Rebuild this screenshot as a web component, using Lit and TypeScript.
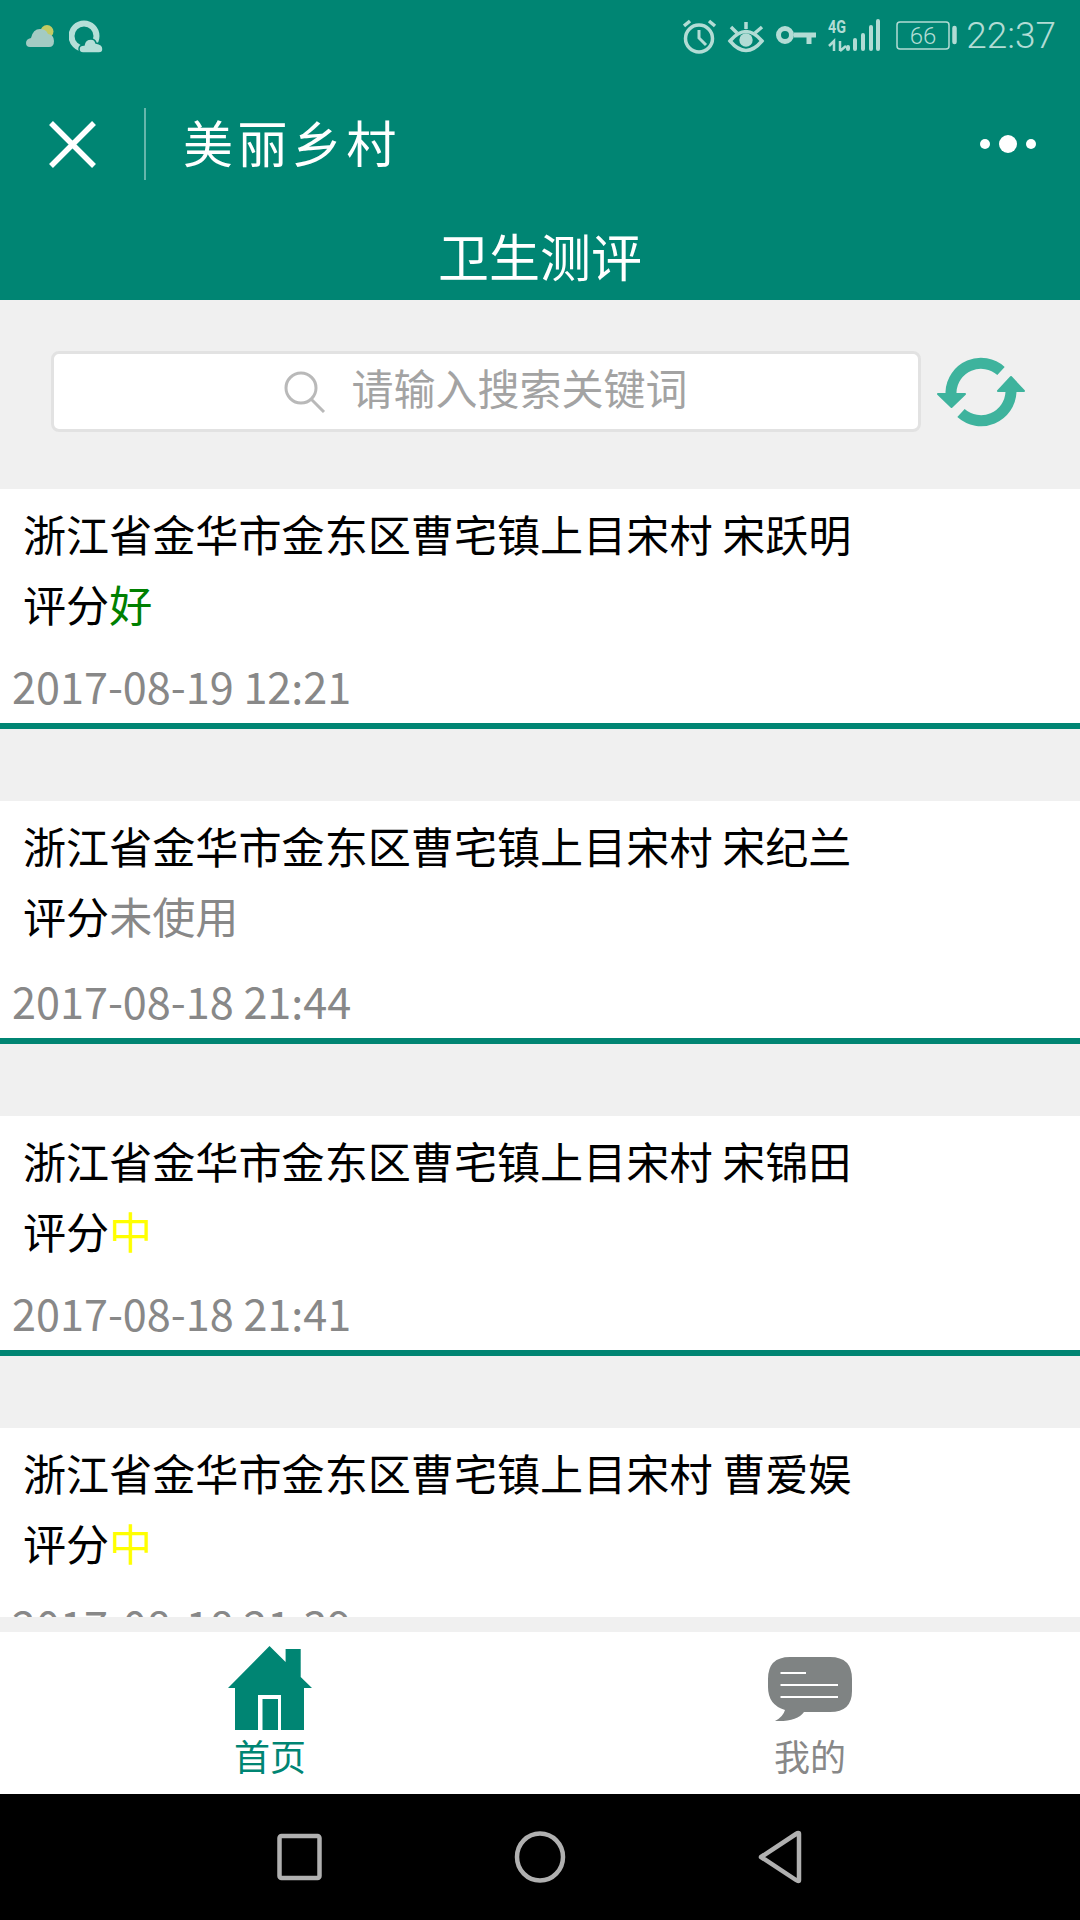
import { LitElement, html, css, svg } from 'lit';
import { customElement } from 'lit/decorators.js';

type Grade = 'good' | 'unused' | 'medium';

const RECORDS: { name: string; label: string; grade: Grade; date: string }[] = [
  { name: '宋跃明', label: '好', grade: 'good', date: '2017-08-19 12:21' },
  { name: '宋纪兰', label: '未使用', grade: 'unused', date: '2017-08-18 21:44' },
  { name: '宋锦田', label: '中', grade: 'medium', date: '2017-08-18 21:41' },
  { name: '曹爱娱', label: '中', grade: 'medium', date: '2017-08-18 21:39' },
];

const ADDRESS = '浙江省金华市金东区曹宅镇上目宋村';

@customElement('app-root')
export class AppRoot extends LitElement {
  static styles = css`
    :host {
      display: flex;
      flex-direction: column;
      width: 1080px;
      height: 1920px;
      overflow: hidden;
      background: #f0f0f0;
      font-family: 'Noto Sans CJK SC', 'Noto Sans', sans-serif;
      color: #000;
    }

    header {
      display: flex;
      flex-direction: column;
      height: 300px;
      flex: none;
      background: #008573;
      color: #fff;
    }

    .status {
      display: flex;
      align-items: center;
      height: 72px;
      padding: 0 24px 0 26px;
    }

    .status svg {
      display: block;
      flex: none;
    }

    .status-left {
      display: flex;
      align-items: center;
      gap: 15px;
      flex: 1;
    }

    .status-right {
      display: flex;
      align-items: center;
    }

    .time {
      margin-left: 9px;
      font-family: Roboto, sans-serif;
      font-size: 37px;
      font-weight: 300;
      line-height: 72px;
      color: #b2dcd5;
    }

    .title-bar {
      display: flex;
      align-items: center;
      height: 72px;
      margin-top: 36px;
      padding-left: 49px;
    }

    .divider {
      width: 2px;
      height: 72px;
      margin: 0 37px 0 48px;
      background: rgba(255, 255, 255, 0.4);
    }

    .title {
      flex: 1;
      padding-bottom: 7px;
      font-size: 50px;
      letter-spacing: 4.4px;
      line-height: 72px;
    }

    .dots {
      margin-right: 44px;
    }

    .subtitle {
      margin-top: 40px;
      text-align: center;
      font-size: 51px;
      line-height: 70px;
    }

    .search-row {
      display: flex;
      align-items: center;
      flex: none;
      padding: 51px 55px 57px 51px;
    }

    .search {
      display: flex;
      align-items: center;
      justify-content: center;
      gap: 25px;
      box-sizing: border-box;
      width: 870px;
      height: 81px;
      background: #fff;
      border: 3px solid #e2e2e2;
      border-radius: 8px;
      color: #a3a3a3;
      font-size: 42px;
    }

    .search span {
      padding-bottom: 11px;
    }

    .refresh {
      margin-left: 16px;
    }

    .list {
      flex: 1;
      min-height: 0;
      overflow: hidden;
    }

    .card {
      margin-bottom: 72px;
      padding-top: 9px;
      background: #fff;
      border-bottom: 6px solid #008573;
    }

    .line {
      padding-left: 23px;
      font-size: 43.1px;
      line-height: 70px;
      white-space: pre;
    }

    .date {
      padding: 12px 0 2px 12px;
      font-size: 43.2px;
      line-height: 71px;
      color: #888;
    }

    /* the row with the longer grade sits 3px taller in the reference */
    .card.tall .date {
      padding-top: 15px;
    }

    .grade.good { color: #008000; }
    .grade.unused { color: #888; }
    .grade.medium { color: #ffff00; }

    nav.tabs {
      display: grid;
      grid-template-columns: 1fr 1fr;
      flex: none;
      height: 162px;
      margin-top: 15px;
      background: #fff;
    }

    .tab {
      display: flex;
      flex-direction: column;
      align-items: center;
      font-size: 36px;
      line-height: 50px;
      color: #888;
    }

    .tab.active {
      color: #008573;
    }

    .tab-icon {
      display: flex;
      align-items: flex-end;
      justify-content: center;
      height: 98px;
    }

    .bubble {
      margin-bottom: 7px;
    }

    .keys {
      display: flex;
      flex: none;
      height: 126px;
      background: #000;
    }

    .keys svg {
      display: block;
      width: 100%;
      height: 100%;
    }
  `;

  render() {
    return html`
      ${this.renderHeader()}
      <div class="search-row">
        <div class="search">
          <svg width="42" height="42" viewBox="0 0 42 42" fill="none" stroke="#b9b9b9" stroke-width="3">
            <circle cx="17" cy="17" r="15" />
            <path d="M27 28 L40 41" />
          </svg>
          <span>请输入搜索关键词</span>
        </div>
        <svg class="refresh" width="88" height="73" viewBox="937 356 88 73">
          <g fill="none" stroke="#3eb39d" stroke-width="11">
            <path d="M1001 372 A30 30 0 0 0 951 393 V397" />
            <path d="M961 414 A30 30 0 0 0 1011 393 V389" />
          </g>
          <path d="M938 395 H965 L951.5 408 Z M998 392 H1024 L1011 378 Z" fill="#3eb39d" stroke="#3eb39d" stroke-width="2" stroke-linejoin="round" />
        </svg>
      </div>
      <div class="list">${RECORDS.map((r) => this.renderCard(r))}</div>
      ${this.renderTabs()}
      <div class="keys">
        <svg viewBox="0 0 1080 126" fill="none" stroke="#b0b0b0" stroke-width="4.5" stroke-linejoin="round">
          <rect x="279.5" y="42" width="40" height="42" rx="2" />
          <ellipse cx="540" cy="63" rx="23" ry="23.5" />
          <path d="M799 40 V86 Q799 88 796 86 L761 63 L796 40 Q799 38 799 40 Z" />
        </svg>
      </div>
    `;
  }

  private renderHeader() {
    return html`<header>
      <div class="status">
        <div class="status-left">
          <svg width="28" height="23" viewBox="0 0 28 23">
            <circle cx="21" cy="6.5" r="6.5" fill="#c3cb63" />
            <path d="M4 22 Q0 22 0 18 Q0 14 5 13 Q7 4 14 4 Q20 4 22 9 Q28 10 28 16 Q28 22 23 22 Z" fill="#a3cbc3" />
          </svg>
          <svg width="34" height="33" viewBox="0 0 34 33">
            <circle cx="15" cy="16" r="12.5" fill="none" stroke="#b5dfd8" stroke-width="6" />
            <path d="M14 33 Q10 33 10 29 Q10 25 15 25 Q16 19 22 19 Q26 19 27 23 Q34 24 34 29 Q34 33 30 33 Z" fill="#b5dfd8" stroke="#008573" stroke-width="1.5" />
          </svg>
        </div>
        <div class="status-right">${this.renderStatusIcons()}<span class="time">22:37</span></div>
      </div>
      <div class="title-bar">
        <svg width="47" height="47" viewBox="0 0 47 47" stroke="#fff" stroke-width="5.5">
          <path d="M2 2 L45 45 M45 2 L2 45" />
        </svg>
        <div class="divider"></div>
        <div class="title">美丽乡村</div>
        <svg class="dots" width="56" height="18" viewBox="0 0 56 18" fill="#fff">
          <circle cx="5" cy="9" r="5" />
          <circle cx="28" cy="9" r="9" />
          <circle cx="51" cy="9" r="5" />
        </svg>
      </div>
      <div class="subtitle">卫生测评</div>
    </header>`;
  }

  private renderStatusIcons() {
    const c = '#b2dcd5';
    return svg`<svg width="274" height="36" viewBox="683 18 274 36" fill="none" stroke=${c}>
      <circle cx="699" cy="38.5" r="13.5" stroke-width="3.5" />
      <path d="M699 30 V38 L706 45" stroke-width="3" />
      <path d="M684 26 L690 21 M709 21 L715 26" stroke-width="3.5" />
      <path d="M730 41 Q746 22 762 41 Q746 60 730 41 Z" stroke-width="3.5" />
      <circle cx="746" cy="40" r="6.7" fill=${c} stroke="none" />
      <path d="M746 22 V29 M731 27 L737 33 M762 27 L755 33" stroke-width="3.5" />
      <circle cx="785" cy="35" r="6.5" stroke-width="5" />
      <path d="M794 35 H816 M809 35 V44" stroke-width="5" />
      <text x="828" y="33" textLength="18" lengthAdjust="spacingAndGlyphs" fill=${c} stroke="none" font-family="Roboto, sans-serif" font-size="18" font-weight="700">4G</text>
      <path d="M829 46 L834 41 V51 M840 51 V41 M840 51 L846 46" stroke-width="2.5" />
      <g stroke-width="4" stroke-linecap="round">
        <path d="M848 47 V49 M855 40 V49 M863 35 V49 M871 27 V49 M878 21 V49" />
      </g>
      <rect x="897" y="22" width="52" height="27" rx="3" stroke-width="1.5" />
      <path d="M954.5 28 V42" stroke-width="4.5" stroke-linecap="round" />
      <text x="923" y="44" text-anchor="middle" fill=${c} stroke="none" font-family="Roboto, sans-serif" font-size="24" font-weight="300">66</text>
    </svg>`;
  }

  private renderCard(r: { name: string; label: string; grade: Grade; date: string }) {
    return html`<div class="card ${r.grade === 'unused' ? 'tall' : ''}">
      <div class="line">${ADDRESS} ${r.name}</div>
      <div class="line">评分<span class="grade ${r.grade}">${r.label}</span></div>
      <div class="date">${r.date}</div>
    </div>`;
  }

  private renderTabs() {
    return html`<nav class="tabs">
      <div class="tab active">
        <div class="tab-icon">
          <svg width="84" height="84" viewBox="0 0 84 84">
            <path fill-rule="evenodd" fill="#008573" d="M41.5 0 L57.6 16 V3 H72.7 V31 L84 42 H76 V84 H7 V42 H0 Z M30 49 V84 H53 V49 Z" />
            <path fill="#008573" d="M34.5 53 H50 V84 H34.5 Z" />
          </svg>
        </div>
        <span>首页</span>
      </div>
      <div class="tab">
        <div class="tab-icon">
          <svg class="bubble" width="84" height="66" viewBox="0 0 84 66">
            <path fill="#7f8383" d="M22 0 H62 Q84 0 84 22 V34 Q84 55 62 55 H36 Q29 65 7 64 Q15 60 17 53 Q0 48 0 30 V22 Q0 0 22 0 Z" />
            <path stroke="#fff" stroke-width="2" d="M12.5 16 H38 M12.5 28 H70 M12.5 40 H70" />
          </svg>
        </div>
        <span>我的</span>
      </div>
    </nav>`;
  }
}
